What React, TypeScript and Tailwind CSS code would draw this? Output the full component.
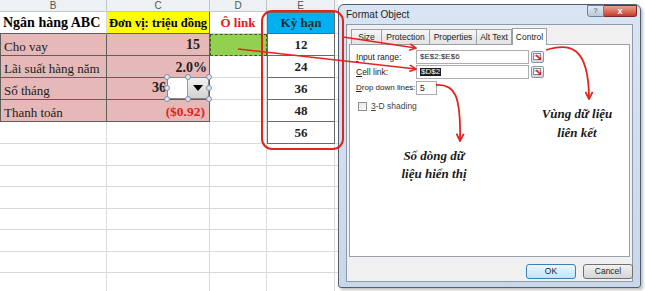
import React from "react";

const serif = { fontFamily: '"Liberation Serif", "Times New Roman", serif' };
const sans = { fontFamily: '"Liberation Sans", Arial, sans-serif' };

const G = "border-r border-b border-[#d9d9d9]";
const PINK = "bg-[#e6b8b7] border-r border-b border-[#5e5e5e]";
const ECELL = "border-r border-b border-l border-[#6a6a6a] bg-white flex items-center justify-center font-bold text-[13px] text-[#222]";

function Handle() {
  return <div className="w-[6px] h-[6px] rounded-full bg-[#dfe8f2] border border-[#7d8ea3]" />;
}

function RefBtn() {
  return (
    <div className="w-[13px] h-[12px] border border-[#8d96a3] rounded-[2px] bg-gradient-to-b from-[#f4f6f9] to-[#cfd5dd] flex items-center justify-center">
      <svg width="9" height="8" viewBox="0 0 9 8">
        <rect x="0.5" y="0.5" width="7" height="6" fill="#fff" stroke="#7a8a9a" />
        <line x1="0.5" y1="3" x2="7.5" y2="3" stroke="#9aa" />
        <path d="M3 2 L7 6" stroke="#d02020" strokeWidth="1.6" />
        <path d="M5 6.5 L7.5 6.5 L7.5 4" stroke="#d02020" strokeWidth="1.2" fill="none" />
      </svg>
    </div>
  );
}

export default function App() {
  const emptyRows = Array.from({ length: 7 });
  return (
    <div className="relative w-[645px] h-[291px] overflow-hidden bg-white flex" style={serif}>
      {/* Spreadsheet */}
      <div className="w-[338px] shrink-0">
        <div className="grid grid-cols-[107px_103px_57px_68px_3px] grid-rows-[12px_repeat(6,22px)_repeat(7,21.5px)]">
          {["B", "C", "D", "E"].map((l) => (
            <div key={l} className="bg-[#eef1f4] border-r border-b border-[#c3c7cc] flex items-center justify-center text-[10px] leading-none text-[#555]" style={sans}>{l}</div>
          ))}
          <div className="bg-[#eef1f4] border-b border-[#c3c7cc]" />

          {/* row 1 */}
          <div className="border-r border-b border-[#5e5e5e] border-r-[#d9d9d9] flex items-end pb-[3px] pl-[3px] font-bold text-[14px] text-black leading-none">Ngân hàng ABC</div>
          <div className="bg-[#ffff00] border-r border-b border-[#5e5e5e] flex items-end justify-center pb-[4px] font-bold text-[12.5px] text-black leading-none">Đơn vị: triệu đồng</div>
          <div className={`${G} flex items-end justify-center pb-[4px] font-bold text-[13px] text-[#e02020] leading-none`}>Ô link</div>
          <div className="bg-[#00b0f0] border border-[#6a6a6a] flex items-center justify-center text-[13px] font-bold text-[#1d2a3a]">Kỳ hạn</div>
          <div className="border-b border-[#d9d9d9]" />

          {/* row 2 */}
          <div className={`${PINK} border-l flex items-end pb-[2px] pl-[3px] text-[13px] text-[#222] leading-none`}>Cho vay</div>
          <div className={`${PINK} flex items-end justify-end pb-[3px] pr-[9px] font-bold text-[14px] text-[#222] leading-none`}>15</div>
          <div className="bg-[#92d050] border border-dashed border-[#3d5c25] border-b-[1px]" />
          <div className={ECELL}>12</div>
          <div className="border-b border-[#d9d9d9]" />

          {/* row 3 */}
          <div className={`${PINK} border-l flex items-end pb-[2px] pl-[3px] text-[13px] text-[#222] leading-none`}>Lãi suất hàng năm</div>
          <div className={`${PINK} flex items-end justify-end pb-[2px] pr-[2px] font-bold text-[14px] text-[#222] leading-none`}>2.0%</div>
          <div className={G} />
          <div className={ECELL}>24</div>
          <div className="border-b border-[#d9d9d9]" />

          {/* row 4 */}
          <div className={`${PINK} border-l flex items-end pb-[2px] pl-[3px] text-[13px] text-[#222] leading-none`}>Số tháng</div>
          <div className={`${PINK} flex items-end justify-end pb-[4px] pr-[43px] font-bold text-[14px] text-[#222] leading-none`}>36</div>
          <div className={G} />
          <div className={ECELL}>36</div>
          <div className="border-b border-[#d9d9d9]" />

          {/* row 5 */}
          <div className={`${PINK} border-l flex items-end pb-[2px] pl-[3px] text-[13px] text-[#222] leading-none`}>Thanh toán</div>
          <div className={`${PINK} flex items-end justify-end pb-[3px] pr-[4px] font-bold text-[13.5px] text-[#e82020] leading-none`}>($0.92)</div>
          <div className={G} />
          <div className={ECELL}>48</div>
          <div className="border-b border-[#d9d9d9]" />

          {/* row 6 */}
          <div className={G} />
          <div className={G} />
          <div className={G} />
          <div className={ECELL}>56</div>
          <div className="border-b border-[#d9d9d9]" />

          {emptyRows.map((_, i) => (
            <React.Fragment key={i}>
              <div className={G} />
              <div className={G} />
              <div className={G} />
              <div className={G} />
              <div className="border-b border-[#d9d9d9]" />
            </React.Fragment>
          ))}
        </div>
      </div>

      {/* Dialog */}
      <div className="mt-[4px] w-[303px] h-[284px] shrink-0 rounded-t-[6px] rounded-b-[3px] border border-[#4f5f74] bg-gradient-to-b from-[#d9e5f2] to-[#c9d7e8] flex flex-col px-[7px] pb-[5px] shadow-[2px_2px_3px_rgba(0,0,0,0.25)]" style={sans}>
        <div className="h-[19px] flex items-start justify-between shrink-0">
          <div className="pt-[5px] text-[10px] text-[#1e1e1e] leading-none">Format Object</div>
          <div className="flex mr-[-4px]">
            <div className="w-[17px] h-[12px] border border-[#6d7f95] rounded-bl-[3px] bg-gradient-to-b from-[#e3ebf4] to-[#b9c9dc] flex items-center justify-center text-[8px] text-[#4a5a70] leading-none">?</div>
            <div className="w-[33px] h-[12px] border border-l-0 border-[#7a2a20] rounded-br-[3px] bg-gradient-to-b from-[#e8a093] to-[#c6382a] flex items-center justify-center text-[9px] font-bold text-white leading-none">x</div>
          </div>
        </div>
        <div className="flex-1 bg-[#f0f0f0] border border-[#8a9bb0] flex flex-col px-[2px] pt-[3px]">
          {/* tabs */}
          <div className="flex items-end h-[16px] pl-[2px] text-[8.5px] text-[#222] leading-none whitespace-nowrap">
            <div className="h-[15px] w-[31px] border border-b-0 border-[#9aa0a8] bg-gradient-to-b from-[#f6f6f6] to-[#e3e3e3] flex items-center justify-center">Size</div>
            <div className="h-[15px] w-[48px] border border-b-0 border-l-0 border-[#9aa0a8] bg-gradient-to-b from-[#f6f6f6] to-[#e3e3e3] flex items-center justify-center">Protection</div>
            <div className="h-[15px] w-[47px] border border-b-0 border-l-0 border-[#9aa0a8] bg-gradient-to-b from-[#f6f6f6] to-[#e3e3e3] flex items-center justify-center">Properties</div>
            <div className="h-[15px] w-[35px] border border-b-0 border-l-0 border-[#9aa0a8] bg-gradient-to-b from-[#f6f6f6] to-[#e3e3e3] flex items-center justify-center">Alt Text</div>
            <div className="h-[17px] w-[35px] mb-[-1px] relative z-10 border border-b-0 border-[#9aa0a8] bg-white flex items-center justify-center">Control</div>
          </div>
          <div className="h-[213px] bg-white border border-[#9aa0a8] pl-[6px] pt-[5px] text-[8.5px] text-[#222] flex flex-col gap-[1px] leading-none whitespace-nowrap">
            <div className="flex items-center h-[14px]">
              <div className="w-[60px] shrink-0"><u>I</u>nput range:</div>
              <div className="w-[113px] h-[14px] border border-[#abadb3] bg-white flex items-center pl-[3px] text-[8px]">$E$2:$E$6</div>
              <div className="ml-[2px]"><RefBtn /></div>
            </div>
            <div className="flex items-center h-[14px]">
              <div className="w-[60px] shrink-0"><u>C</u>ell link:</div>
              <div className="w-[113px] h-[14px] border border-[#abadb3] bg-white flex items-center pl-[3px] text-[8px]">
                <span className="bg-[#1c1c1c] text-white px-[1px]">$D$2</span>
              </div>
              <div className="ml-[2px]"><RefBtn /></div>
            </div>
            <div className="flex items-center h-[14px] mt-[1px]">
              <div className="w-[60px] shrink-0 text-[8px]"><u>D</u>rop down lines:</div>
              <div className="w-[21px] h-[14px] border border-[#abadb3] bg-white flex items-center pl-[3px] text-[8.5px]">5</div>
            </div>
            <div className="flex items-center h-[14px] mt-[3px] pl-[2px] gap-[4px]">
              <div className="w-[9px] h-[9px] border border-[#8f8f8f] bg-gradient-to-br from-[#e6e6e6] to-[#fafafa]" />
              <div className="text-[#444]"><u>3</u>-D shading</div>
            </div>
          </div>
          <div className="flex justify-end gap-[7px] mt-[7px] mr-[-3px]">
            <div className="w-[50px] h-[15px] rounded-[3px] border border-[#3c7fb1] bg-gradient-to-b from-[#eaf6fd] to-[#bee6fd] flex items-center justify-center text-[8.5px] text-[#222] leading-none">OK</div>
            <div className="w-[50px] h-[15px] rounded-[3px] border border-[#707070] bg-gradient-to-b from-[#f2f2f2] to-[#d5d5d5] flex items-center justify-center text-[8.5px] text-[#222] leading-none">Cancel</div>
          </div>
        </div>
      </div>

      {/* Combo box control with selection handles */}
      <div className="absolute left-[167px] top-[77px] w-[42px] h-[22px]">
        <div className="absolute inset-0 flex border border-[#8a8a8a] bg-white">
          <div className="flex-1 bg-white" />
          <div className="w-[21px] bg-gradient-to-b from-[#f2f2f2] to-[#d2d2d2] border-l border-[#9a9a9a] flex items-center justify-center">
            <svg width="10" height="6" viewBox="0 0 10 6"><path d="M0 0 L10 0 L5 6 Z" fill="#000" /></svg>
          </div>
        </div>
        <div className="absolute left-[-3px] top-[-3px]"><Handle /></div>
        <div className="absolute left-[18px] top-[-3px]"><Handle /></div>
        <div className="absolute right-[-3px] top-[-3px]"><Handle /></div>
        <div className="absolute left-[-3px] top-[8px]"><Handle /></div>
        <div className="absolute right-[-3px] top-[8px]"><Handle /></div>
        <div className="absolute left-[-3px] bottom-[-3px]"><Handle /></div>
        <div className="absolute left-[18px] bottom-[-3px]"><Handle /></div>
        <div className="absolute right-[-3px] bottom-[-3px]"><Handle /></div>
      </div>

      {/* Annotation overlay: red outline and arrows */}
      <svg className="absolute left-0 top-0 pointer-events-none" width="645" height="291" viewBox="0 0 645 291">
        <defs>
          <marker id="ah" viewBox="0 0 10 10" refX="9" refY="5" markerWidth="5" markerHeight="5" orient="auto">
            <path d="M1 1 L9 5 L1 9" fill="none" stroke="#e4231f" strokeWidth="2" />
          </marker>
        </defs>
        <rect x="262" y="11" width="81" height="138" rx="10" fill="none" stroke="#e4231f" strokeWidth="2" />
        <path d="M343 37 L416 48" stroke="#e4231f" strokeWidth="1.6" fill="none" markerEnd="url(#ah)" />
        <path d="M238 49 L416 69" stroke="#e4231f" strokeWidth="1.6" fill="none" markerEnd="url(#ah)" />
        <path d="M546 50 C568 43, 589 44, 589 99" stroke="#e4231f" strokeWidth="1.8" fill="none" markerEnd="url(#ah)" />
        <path d="M436 85 C455 84, 461 95, 460 141" stroke="#e4231f" strokeWidth="1.8" fill="none" markerEnd="url(#ah)" />
      </svg>

      <div className="absolute left-[534px] top-[104px] w-[86px] text-center font-bold italic text-[13px] leading-[19px] text-[#1a1a1a]" style={serif}>
        Vùng dữ liệu<br />liên kết
      </div>
      <div className="absolute left-[394px] top-[147px] w-[80px] text-center font-bold italic text-[13px] leading-[18px] text-[#1a1a1a]" style={serif}>
        Số dòng dữ<br />liệu hiển thị
      </div>
    </div>
  );
}
